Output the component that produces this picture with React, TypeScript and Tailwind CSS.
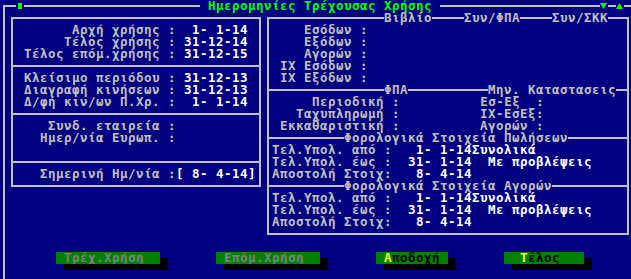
import React from 'react';

type Tone = 'g' | 'w' | 'G';
type Seg = [number, string, Tone?];

const toneClass: Record<Tone, string> = {
  g: 'text-[#c0c0c0]',
  w: 'text-white',
  G: 'text-[#00ff00]',
};

const SPECIAL = '─│┌┐└┘├┤■▼▲';

const line = (n: number) => '─'.repeat(n);

// one text-mode cell that is a drawing (box line, block, arrow)
function Glyph({ ch }: { ch: string }) {
  const L = '─┐┘┤'.includes(ch);
  const R = '─┌└├'.includes(ch);
  const U = '│└┘├┤'.includes(ch);
  const D = '│┌┐├┤'.includes(ch);
  return (
    <svg width="8" height="12" viewBox="0 0 8 12" className="shrink-0" fill="currentColor">
      {L && <rect x="0" y="5" width="5" height="2" />}
      {R && <rect x="3" y="5" width="5" height="2" />}
      {U && <rect x="3" y="0" width="2" height="7" />}
      {D && <rect x="3" y="5" width="2" height="7" />}
      {ch === '■' && <rect x="2" y="3" width="4" height="6" />}
      {ch === '▼' && <polygon points="0,3 7,3 3.5,9" />}
      {ch === '▲' && <polygon points="0,9 7,9 3.5,3" />}
    </svg>
  );
}

function Row({ segs }: { segs: Seg[] }) {
  const parts: React.ReactNode[] = [];
  let col = 0;
  let k = 0;
  for (const [at, text, tone = 'g'] of segs) {
    if (at > col) {
      parts.push(<span key={k++}>{' '.repeat(at - col)}</span>);
      col = at;
    }
    let run = '';
    const flush = () => {
      if (run) parts.push(<span key={k++} className={toneClass[tone]}>{run}</span>);
      run = '';
    };
    for (const ch of text) {
      if (SPECIAL.includes(ch)) {
        flush();
        parts.push(
          <span key={k++} className={toneClass[tone]}>
            <Glyph ch={ch} />
          </span>
        );
      } else {
        run += ch;
      }
      col++;
    }
    flush();
  }
  return <div className="flex h-3 items-start">{parts}</div>;
}

const rows: Seg[][] = [
  [[0, '┌─'], [2, '■', 'G'], [3, line(22)], [26, 'Ημερομηνίες Τρέχουσας Χρήσης', 'G'], [55, line(20)], [75, '▼', 'G'], [76, '─'], [77, '▲', 'G'], [78, '─']],
  [[0, '│┌' + line(30) + '┐┌' + line(14) + 'Βιβλίο────Συν/ΦΠΑ────Συν/ΣΚΚ──┐']],
  [[0, '││'], [9, 'Αρχή χρήσης :'], [23, ' 1- 1-14', 'w'], [32, '││'], [38, 'Εσόδων :'], [78, '│']],
  [[0, '││'], [8, 'Τέλος χρήσης :'], [23, '31-12-14', 'w'], [32, '││'], [38, 'Εξόδων :'], [78, '│']],
  [[0, '││'], [3, 'Τέλος επόμ.χρήσης :'], [23, '31-12-15', 'w'], [32, '││'], [38, 'Αγορών :'], [78, '│']],
  [[0, '│├' + line(30) + '┤│'], [35, 'IX Εσόδων :'], [78, '│']],
  [[0, '││'], [3, 'Κλείσιμο περιόδου :'], [23, '31-12-13', 'w'], [32, '││'], [35, 'IX Εξόδων :'], [78, '│']],
  [[0, '││'], [3, 'Διαγραφή κινήσεων :'], [23, '31-12-13', 'w'], [32, '│├' + line(14) + 'ΦΠΑ' + line(10) + 'Μην. Καταστασεις─┤']],
  [[0, '││'], [3, 'Δ/φή κιν/ων Π.Χρ. :'], [23, ' 1- 1-14', 'w'], [32, '││'], [39, 'Περιοδική :'], [60, 'Εσ-Εξ  :'], [78, '│']],
  [[0, '│├' + line(30) + '┤│'], [37, 'Ταχυπληρωμή :'], [60, 'IX-ΕσΕξ:'], [78, '│']],
  [[0, '││'], [6, 'Συνδ. εταιρεία :'], [32, '││'], [35, 'Εκκαθαριστική :'], [60, 'Αγορών :'], [78, '│']],
  [[0, '││'], [5, 'Ημερ/νία Ευρωπ. :'], [32, '│├' + line(9) + 'Φορολογικά Στοιχεία Πωλήσεων' + line(7) + '┤']],
  [[0, '││'], [32, '││'], [34, 'Τελ.Υπολ. από :'], [52, '1- 1-14Συνολικά', 'w'], [78, '│']],
  [[0, '│├' + line(30) + '┤│'], [34, 'Τελ.Υπολ. έως :'], [51, '31- 1-14  Με προβλέψεις', 'w'], [78, '│']],
  [[0, '││'], [5, 'Σημερινή Ημ/νία :'], [22, '[ 8- 4-14]', 'w'], [32, '││'], [34, 'Αποστολή Στοιχ:'], [52, '8- 4-14', 'w'], [78, '│']],
  [[0, '│└' + line(30) + '┘├' + line(9) + 'Φορολογικά Στοιχεία Αγορών' + line(9) + '┤']],
  [[0, '│'], [33, '│'], [34, 'Τελ.Υπολ. από :'], [52, '1- 1-14Συνολικά', 'w'], [78, '│']],
  [[0, '│'], [33, '│'], [34, 'Τελ.Υπολ. έως :'], [51, '31- 1-14  Με προβλέψεις', 'w'], [78, '│']],
  [[0, '│'], [33, '│'], [34, 'Αποστολή Στοιχ:'], [52, '8- 4-14', 'w'], [78, '│']],
  [[0, '│'], [33, '└' + line(44) + '┘']],
  [[0, '│']],
];

function Button({ children }: { children: React.ReactNode }) {
  return (
    <>
      <span className="bg-[#008000] h-3">{children}</span>
      <span className="flex h-3 w-2 flex-col">
        <span className="h-1.5" />
        <span className="h-1.5 bg-black" />
      </span>
    </>
  );
}

export default function App() {
  return (
    <div className="w-[631px] h-[279px] overflow-hidden bg-[#000080] font-['DejaVu_Sans_Mono',monospace] text-[12.5px] leading-3 font-bold tracking-[0.4744px] whitespace-pre text-[#c0c0c0]">
      <div className="w-[640px]">
        {rows.map((segs, i) => (
          <Row key={i} segs={segs} />
        ))}

        {/* push buttons */}
        <div className="flex h-3 items-start">
          <Glyph ch="│" />
          <span className="w-12" />
          <Button>
            <span className="text-[#808080]"> Τρέχ.Χρήση  </span>
          </Button>
          <span className="w-12" />
          <Button>
            <span className="text-[#808080]"> Επόμ.Χρήση  </span>
          </Button>
          <span className="w-12" />
          <Button>
            <span className="text-black"> <span className="text-[#ffff00]">Α</span>ποδοχή </span>
          </Button>
          <span className="w-12" />
          <Button>
            <span className="text-black">  <span className="text-[#ffff00]">Τ</span>έλος   </span>
          </Button>
        </div>

        {/* button shadows */}
        <div className="flex h-3 items-start">
          <Glyph ch="│" />
          <span className="w-14" />
          <span className="h-1.5 w-[104px] bg-black" />
          <span className="w-14" />
          <span className="h-1.5 w-[104px] bg-black" />
          <span className="w-14" />
          <span className="h-1.5 w-[72px] bg-black" />
          <span className="w-14" />
          <span className="h-1.5 w-20 bg-black" />
        </div>

        <div className="flex h-3 items-start">
          <Glyph ch="│" />
        </div>
      </div>
    </div>
  );
}
